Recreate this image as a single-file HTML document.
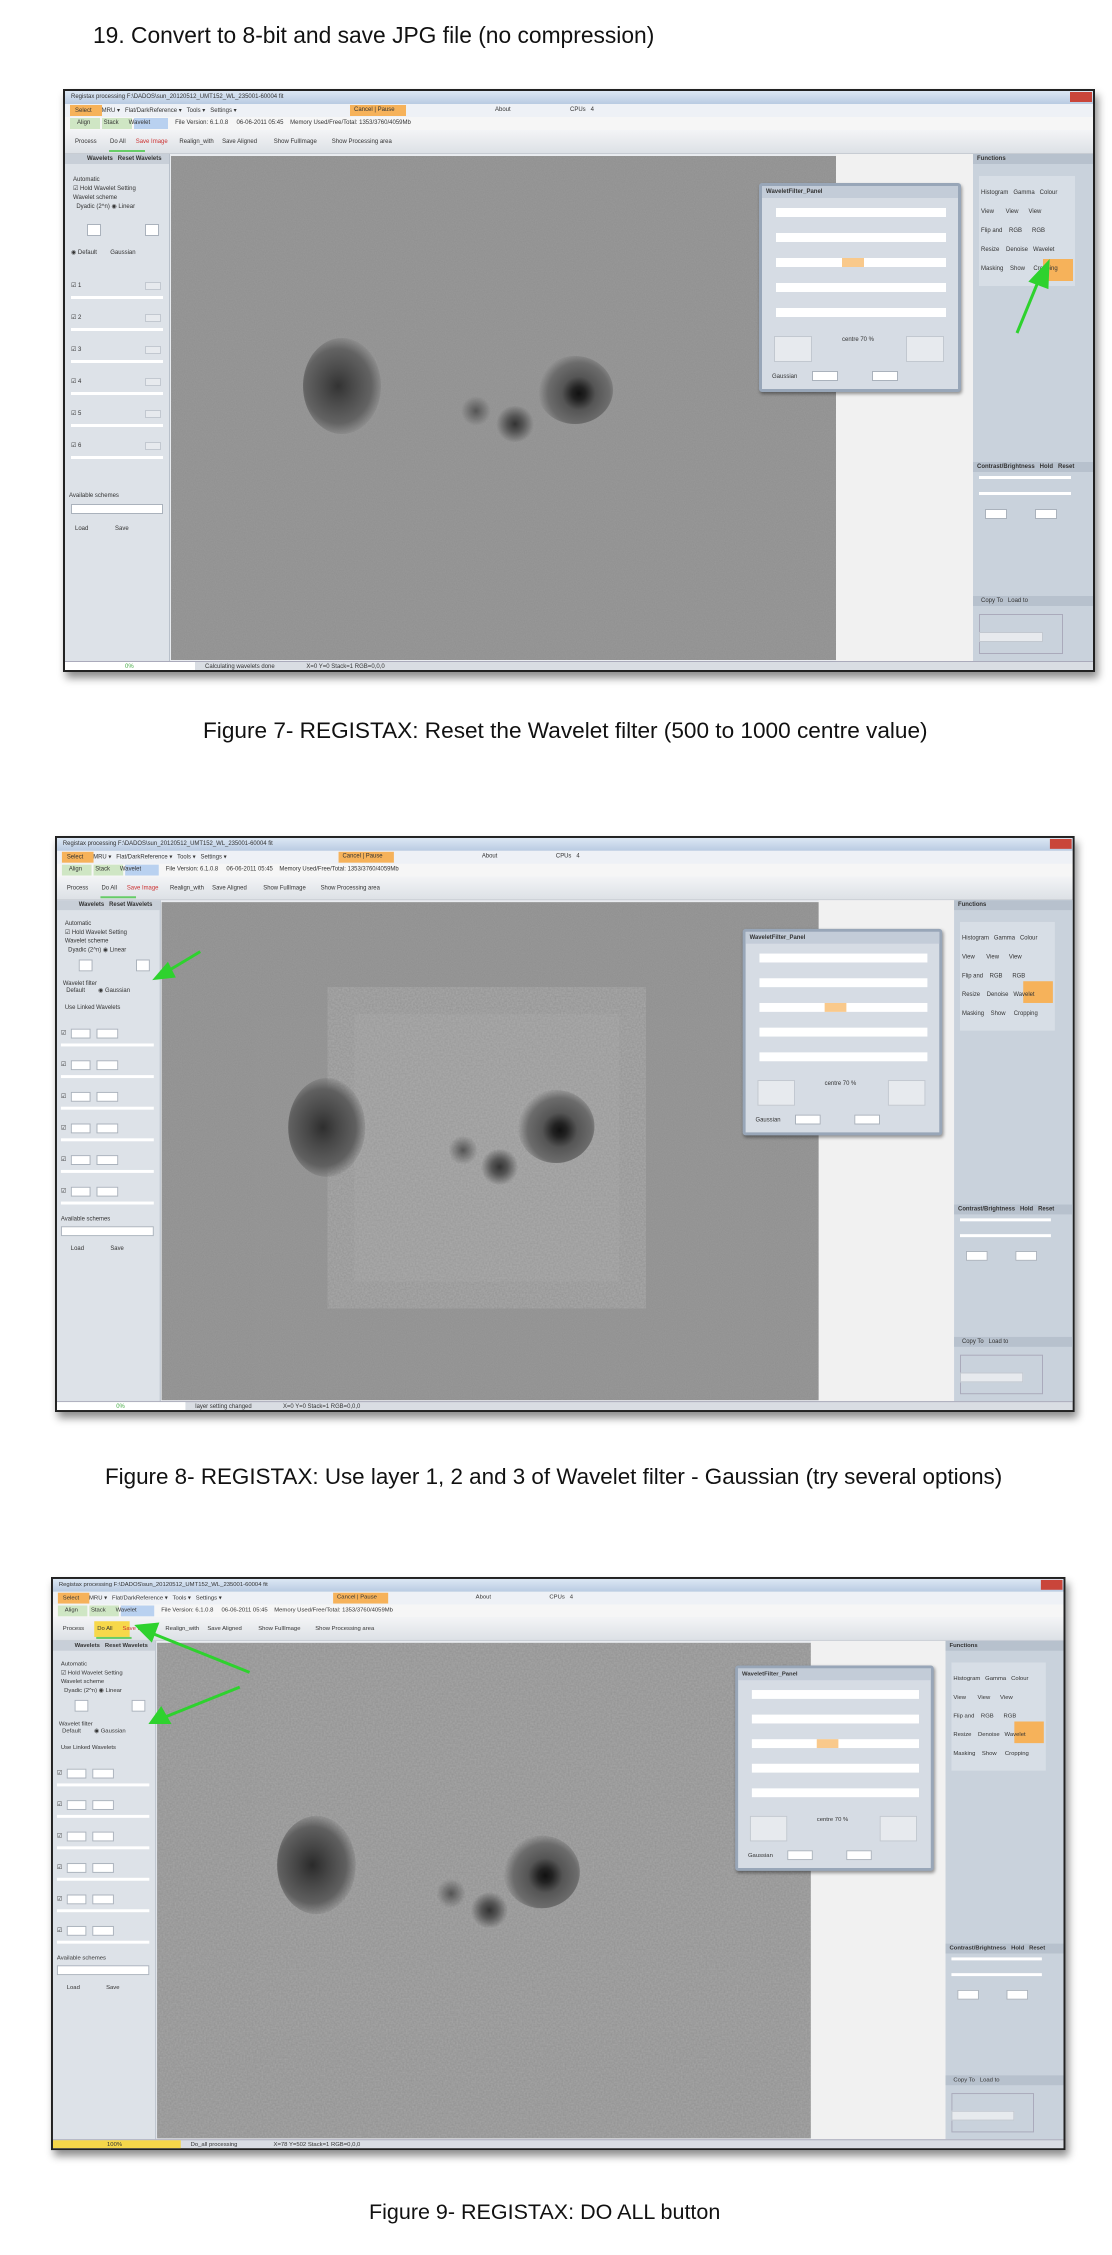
<!DOCTYPE html>
<html><head><meta charset="utf-8">
<style>
*{margin:0;padding:0;box-sizing:border-box}
body{width:1112px;height:2255px;background:#fff;position:relative;overflow:hidden;font-family:"Liberation Sans",sans-serif}
.h{position:absolute;font-family:"Liberation Sans",sans-serif;color:#111;white-space:nowrap}
.ss{position:absolute;width:1032px;height:583px;border:2px solid #222;background:#e9ecf0;box-shadow:3px 6px 8px rgba(0,0,0,.45);overflow:hidden;font-size:6px;color:#333;transform-origin:0 0}
.ss div{position:absolute}
.tb{left:0;top:0;width:100%;height:13px;background:linear-gradient(#dce7f4,#b9cbe2)}
.mn{left:0;top:13px;width:100%;height:13px;background:#eef1f6}
.tabs{left:0;top:26px;width:100%;height:13px;background:#f6f6f6}
.tool{left:0;top:39px;width:100%;height:24px;background:linear-gradient(#f3f4f6,#dde1e6);border-bottom:1px solid #c7ccd3}
.lp{left:0;top:63px;width:105px;height:507px;background:#dde2e8;border-right:1px solid #b8c0ca}
.img{left:106px;top:65px;width:665px;height:504px;background:#8e8e8e;overflow:hidden}
.wh{left:771px;top:63px;width:137px;height:507px;background:#f1f1f1}
.rp{left:908px;top:63px;width:124px;height:507px;background:#c9d2dc}
.st{left:0;top:570px;width:100%;height:13px;background:#d9dde3;border-top:1px solid #aab}
.dlg{left:694px;top:92px;width:202px;height:209px;background:#d6dce4;border:3px solid #98a6b8;border-radius:3px;box-shadow:1px 2px 3px rgba(0,0,0,.4)}
.or{background:#f6b25a}
.btn{background:#e7eaee;border:1px solid #c2c8d0}
.fld{background:#fff;border:1px solid #aab2bc;height:8px}
.spot{border-radius:50%}
svg.tx{position:absolute;left:0;top:0}
.t{white-space:nowrap}
</style></head><body>

<div class="h" style="left:93px;top:22px;font-size:22.8px">19. Convert to 8-bit and save JPG file (no compression)</div>

<!-- ============ FIG 7 ============ -->
<div class="ss" style="left:63px;top:89px">
 <div class="tb"><span class="t" style="position:absolute;left:6px;top:3px">Registax processing F:\DADOS\sun_20120512_UMT152_WL_235001-60004 fit</span><div style="left:1005px;top:1px;width:22px;height:10px;background:#c9453a"></div></div>
 <div class="mn"><div class="or" style="left:5px;top:1px;width:32px;height:11px"></div><span class="t" style="position:absolute;left:10px;top:3px">Select &nbsp;&nbsp;&nbsp;&nbsp; MRU ▾ &nbsp; Flat/DarkReference ▾ &nbsp; Tools ▾ &nbsp; Settings ▾</span><div class="or" style="left:285px;top:1px;width:56px;height:11px"></div><span class="t" style="position:absolute;left:289px;top:3px">Cancel | Pause</span><span class="t" style="position:absolute;left:430px;top:3px">About</span><span class="t" style="position:absolute;left:505px;top:3px">CPUs &nbsp; 4</span></div>
 <div class="tabs"><div style="left:5px;top:1px;width:30px;height:11px;background:#cfe6c4"></div><div style="left:37px;top:1px;width:30px;height:11px;background:#cfe6c4"></div><div style="left:69px;top:1px;width:34px;height:11px;background:#b9d1f0;color:#124"></div><span class="t" style="position:absolute;left:12px;top:3px">Align &nbsp;&nbsp;&nbsp;&nbsp;&nbsp;&nbsp; Stack &nbsp;&nbsp;&nbsp;&nbsp; Wavelet &nbsp;&nbsp;&nbsp;&nbsp;&nbsp;&nbsp;&nbsp;&nbsp;&nbsp;&nbsp;&nbsp;&nbsp;&nbsp; File Version: 6.1.0.8 &nbsp;&nbsp;&nbsp; 06-06-2011 05:45 &nbsp;&nbsp; Memory Used/Free/Total: 1353/3760/4059Mb</span></div>
 <div class="tool"><span class="t" style="position:absolute;left:10px;top:9px">Process &nbsp;&nbsp;&nbsp;&nbsp;&nbsp;&nbsp; Do All &nbsp;&nbsp;&nbsp;&nbsp; <span style="color:#c33">Save Image</span> &nbsp;&nbsp;&nbsp;&nbsp;&nbsp; Realign_with &nbsp;&nbsp;&nbsp; Save Aligned &nbsp;&nbsp;&nbsp;&nbsp;&nbsp;&nbsp;&nbsp;&nbsp; Show FullImage &nbsp;&nbsp;&nbsp;&nbsp;&nbsp;&nbsp;&nbsp; Show Processing area</span><div style="left:44px;top:20px;width:36px;height:2px;background:#6c6"></div></div>
 <div class="lp">
  <div style="left:0;top:0;width:104px;height:10px;background:#c8cfd8"></div><span class="t" style="position:absolute;left:22px;top:2px;font-weight:bold">Wavelets &nbsp; Reset Wavelets</span>
  <span class="t" style="position:absolute;left:8px;top:22px;line-height:9px">Automatic<br>☑ Hold Wavelet Setting<br>Wavelet scheme<br>&nbsp; Dyadic (2^n) ◉ Linear</span>
  <div class="fld" style="left:22px;top:70px;width:14px;height:12px"></div><div class="fld" style="left:80px;top:70px;width:14px;height:12px"></div>
  <span class="t" style="position:absolute;left:6px;top:95px">◉ Default &nbsp;&nbsp;&nbsp;&nbsp;&nbsp;&nbsp; Gaussian</span>
  <div style="left:6px;top:120px;width:92px;height:380px">
   <div style="left:0;top:0;width:92px;height:32px"><span class="t" style="position:absolute;left:0;top:8px">☑ 1</span><div class="btn" style="left:74px;top:8px;width:16px;height:8px"></div><div style="left:0;top:22px;width:92px;height:3px;background:#fff"></div></div>
   <div style="left:0;top:32px;width:92px;height:32px"><span class="t" style="position:absolute;left:0;top:8px">☑ 2</span><div class="btn" style="left:74px;top:8px;width:16px;height:8px"></div><div style="left:0;top:22px;width:92px;height:3px;background:#fff"></div></div>
   <div style="left:0;top:64px;width:92px;height:32px"><span class="t" style="position:absolute;left:0;top:8px">☑ 3</span><div class="btn" style="left:74px;top:8px;width:16px;height:8px"></div><div style="left:0;top:22px;width:92px;height:3px;background:#fff"></div></div>
   <div style="left:0;top:96px;width:92px;height:32px"><span class="t" style="position:absolute;left:0;top:8px">☑ 4</span><div class="btn" style="left:74px;top:8px;width:16px;height:8px"></div><div style="left:0;top:22px;width:92px;height:3px;background:#fff"></div></div>
   <div style="left:0;top:128px;width:92px;height:32px"><span class="t" style="position:absolute;left:0;top:8px">☑ 5</span><div class="btn" style="left:74px;top:8px;width:16px;height:8px"></div><div style="left:0;top:22px;width:92px;height:3px;background:#fff"></div></div>
   <div style="left:0;top:160px;width:92px;height:32px"><span class="t" style="position:absolute;left:0;top:8px">☑ 6</span><div class="btn" style="left:74px;top:8px;width:16px;height:8px"></div><div style="left:0;top:22px;width:92px;height:3px;background:#fff"></div></div>
  </div>
  <span class="t" style="position:absolute;left:4px;top:339px">Available schemes</span>
  <div class="fld" style="left:6px;top:350px;width:92px;height:10px"></div>
  <span class="t" style="position:absolute;left:10px;top:372px">Load &nbsp;&nbsp;&nbsp;&nbsp;&nbsp;&nbsp;&nbsp;&nbsp;&nbsp;&nbsp;&nbsp;&nbsp;&nbsp;&nbsp; Save</span>
 </div>
 <div class="img">
  <svg class="tx" width="665" height="504"><filter id="n1"><feTurbulence type="fractalNoise" baseFrequency="0.9" numOctaves="2" seed="3"/><feColorMatrix type="matrix" values="0 0 0 0 0.55  0 0 0 0 0.55  0 0 0 0 0.55  0 0 0 0.35 0"/></filter><rect width="665" height="504" fill="#8f8f8f"/><rect width="665" height="504" filter="url(#n1)" opacity=".6"/></svg>
  <div class="spot" style="left:132px;top:182px;width:78px;height:96px;background:radial-gradient(ellipse at 45% 50%,#333 0,#4a4a4a 25%,#636363 55%,rgba(110,110,110,0) 75%)"></div>
  <div class="spot" style="left:366px;top:200px;width:76px;height:68px;background:radial-gradient(circle at 55% 55%,#111 0,#222 12%,#555 30%,#6c6c6c 55%,rgba(120,120,120,0) 72%)"></div>
  <div class="spot" style="left:324px;top:250px;width:40px;height:36px;background:radial-gradient(circle,#333 0,#555 30%,rgba(120,120,120,0) 70%)"></div>
  <div class="spot" style="left:290px;top:240px;width:30px;height:30px;background:radial-gradient(circle,#555 0,rgba(120,120,120,0) 70%)"></div>
 </div>
 <div class="wh"></div>
 <div class="rp">
  <div style="left:0;top:0;width:124px;height:10px;background:#b7c1cd"></div><span class="t" style="position:absolute;left:4px;top:2px;font-weight:bold">Functions</span>
  <div style="left:6px;top:22px;width:96px;height:110px;background:#d7dee6"></div>
  <div class="or" style="left:70px;top:105px;width:30px;height:22px"></div>
  <span class="t" style="position:absolute;left:8px;top:30px;line-height:19px">Histogram &nbsp; Gamma &nbsp; Colour<br>View &nbsp;&nbsp;&nbsp;&nbsp;&nbsp; View &nbsp;&nbsp;&nbsp;&nbsp; View<br>Flip and &nbsp;&nbsp; RGB &nbsp;&nbsp;&nbsp;&nbsp; RGB<br>Resize &nbsp;&nbsp; Denoise &nbsp; Wavelet<br>Masking &nbsp;&nbsp; Show &nbsp;&nbsp;&nbsp; Cropping</span>
  <div style="left:0;top:308px;width:124px;height:10px;background:#b7c1cd"></div><span class="t" style="position:absolute;left:4px;top:310px;font-weight:bold">Contrast/Brightness &nbsp; Hold &nbsp; Reset</span>
  <div style="left:6px;top:322px;width:92px;height:3px;background:#fff"></div><div style="left:6px;top:338px;width:92px;height:3px;background:#fff"></div>
  <div class="fld" style="left:12px;top:355px;width:22px;height:10px"></div><div class="fld" style="left:62px;top:355px;width:22px;height:10px"></div>
  <div style="left:0;top:442px;width:124px;height:10px;background:#b7c1cd"></div><span class="t" style="position:absolute;left:8px;top:444px">Copy To &nbsp; Load to</span>
  <div style="left:6px;top:460px;width:84px;height:40px;border:1px solid #aab"></div>
  <div class="btn" style="left:6px;top:478px;width:64px;height:10px"></div>
 </div>
 <div class="dlg">
  <div style="left:0;top:0;width:196px;height:12px;background:#c3ccd8"></div><span class="t" style="position:absolute;left:4px;top:3px;font-weight:bold">WaveletFilter_Panel</span>
  <div style="left:14px;top:22px;width:170px;height:9px;background:#fff"></div>
  <div style="left:14px;top:47px;width:170px;height:9px;background:#fff"></div>
  <div style="left:14px;top:72px;width:170px;height:9px;background:#fff"></div><div class="or" style="left:80px;top:72px;width:22px;height:9px;opacity:.7"></div>
  <div style="left:14px;top:97px;width:170px;height:9px;background:#fff"></div>
  <div style="left:14px;top:122px;width:170px;height:9px;background:#fff"></div>
  <div class="btn" style="left:12px;top:150px;width:38px;height:26px"></div><div class="btn" style="left:144px;top:150px;width:38px;height:26px"></div>
  <span class="t" style="position:absolute;left:80px;top:151px">centre 70 %</span>
  <span class="t" style="position:absolute;left:10px;top:188px">Gaussian</span>
  <div class="fld" style="left:50px;top:185px;width:26px;height:10px"></div><div class="fld" style="left:110px;top:185px;width:26px;height:10px"></div>
 </div>
 <div class="st"><div style="left:0;top:0;width:130px;height:12px;background:#fff"></div><span class="t" style="position:absolute;left:60px;top:2px;color:#4a4">0%</span><span class="t" style="position:absolute;left:140px;top:2px">Calculating wavelets done &nbsp;&nbsp;&nbsp;&nbsp;&nbsp;&nbsp;&nbsp;&nbsp;&nbsp;&nbsp;&nbsp;&nbsp;&nbsp;&nbsp;&nbsp;&nbsp;&nbsp; X=0 Y=0 Stack=1 RGB=0,0,0</span></div>
 <svg style="position:absolute;left:0;top:0" width="1032" height="583"><g stroke="#2ed22e" stroke-width="3" fill="#2ed22e"><line x1="952" y1="242" x2="975" y2="186"/><polygon points="966,190 983,172 982,196"/></g></svg>
</div>
<div class="h" style="left:203px;top:718px;font-size:22.6px">Figure 7- REGISTAX: Reset the Wavelet filter (500 to 1000 centre value)</div>

<!-- ============ FIG 8 ============ -->
<div class="ss" style="left:55px;top:836px;transform:scale(0.988)">
 <div class="tb"><span class="t" style="position:absolute;left:6px;top:3px">Registax processing F:\DADOS\sun_20120512_UMT152_WL_235001-60004 fit</span><div style="left:1005px;top:1px;width:22px;height:10px;background:#c9453a"></div></div>
 <div class="mn"><div class="or" style="left:5px;top:1px;width:32px;height:11px"></div><span class="t" style="position:absolute;left:10px;top:3px">Select &nbsp;&nbsp;&nbsp;&nbsp; MRU ▾ &nbsp; Flat/DarkReference ▾ &nbsp; Tools ▾ &nbsp; Settings ▾</span><div class="or" style="left:285px;top:1px;width:56px;height:11px"></div><span class="t" style="position:absolute;left:289px;top:3px">Cancel | Pause</span><span class="t" style="position:absolute;left:430px;top:3px">About</span><span class="t" style="position:absolute;left:505px;top:3px">CPUs &nbsp; 4</span></div>
 <div class="tabs"><div style="left:5px;top:1px;width:30px;height:11px;background:#cfe6c4"></div><div style="left:37px;top:1px;width:30px;height:11px;background:#cfe6c4"></div><div style="left:69px;top:1px;width:34px;height:11px;background:#b9d1f0"></div><span class="t" style="position:absolute;left:12px;top:3px">Align &nbsp;&nbsp;&nbsp;&nbsp;&nbsp;&nbsp; Stack &nbsp;&nbsp;&nbsp;&nbsp; Wavelet &nbsp;&nbsp;&nbsp;&nbsp;&nbsp;&nbsp;&nbsp;&nbsp;&nbsp;&nbsp;&nbsp;&nbsp;&nbsp; File Version: 6.1.0.8 &nbsp;&nbsp;&nbsp; 06-06-2011 05:45 &nbsp;&nbsp; Memory Used/Free/Total: 1353/3760/4059Mb</span></div>
 <div class="tool"><span class="t" style="position:absolute;left:10px;top:9px">Process &nbsp;&nbsp;&nbsp;&nbsp;&nbsp;&nbsp; Do All &nbsp;&nbsp;&nbsp;&nbsp; <span style="color:#c33">Save Image</span> &nbsp;&nbsp;&nbsp;&nbsp;&nbsp; Realign_with &nbsp;&nbsp;&nbsp; Save Aligned &nbsp;&nbsp;&nbsp;&nbsp;&nbsp;&nbsp;&nbsp;&nbsp; Show FullImage &nbsp;&nbsp;&nbsp;&nbsp;&nbsp;&nbsp;&nbsp; Show Processing area</span><div style="left:44px;top:20px;width:36px;height:2px;background:#6c6"></div></div>
 <div class="lp">
  <div style="left:0;top:0;width:104px;height:10px;background:#c8cfd8"></div><span class="t" style="position:absolute;left:22px;top:2px;font-weight:bold">Wavelets &nbsp; Reset Wavelets</span>
  <span class="t" style="position:absolute;left:8px;top:20px;line-height:9px">Automatic<br>☑ Hold Wavelet Setting<br>Wavelet scheme<br>&nbsp; Dyadic (2^n) ◉ Linear</span>
  <div class="fld" style="left:22px;top:60px;width:14px;height:12px"></div><div class="fld" style="left:80px;top:60px;width:14px;height:12px"></div>
  <span class="t" style="position:absolute;left:6px;top:82px">Wavelet filter<br>&nbsp; Default &nbsp;&nbsp;&nbsp;&nbsp;&nbsp;&nbsp; ◉ Gaussian</span>
  <span class="t" style="position:absolute;left:8px;top:106px">Use Linked Wavelets</span>
  <div style="left:4px;top:128px;width:96px;height:200px">
   <div style="left:0;top:0;width:96px;height:32px"><span class="t" style="position:absolute;left:0;top:3px">☑</span><div class="fld" style="left:10px;top:2px;width:20px;height:10px"></div><div class="fld" style="left:36px;top:2px;width:22px;height:10px"></div><div style="left:0;top:17px;width:94px;height:3px;background:#fff"></div></div>
   <div style="left:0;top:32px;width:96px;height:32px"><span class="t" style="position:absolute;left:0;top:3px">☑</span><div class="fld" style="left:10px;top:2px;width:20px;height:10px"></div><div class="fld" style="left:36px;top:2px;width:22px;height:10px"></div><div style="left:0;top:17px;width:94px;height:3px;background:#fff"></div></div>
   <div style="left:0;top:64px;width:96px;height:32px"><span class="t" style="position:absolute;left:0;top:3px">☑</span><div class="fld" style="left:10px;top:2px;width:20px;height:10px"></div><div class="fld" style="left:36px;top:2px;width:22px;height:10px"></div><div style="left:0;top:17px;width:94px;height:3px;background:#fff"></div></div>
   <div style="left:0;top:96px;width:96px;height:32px"><span class="t" style="position:absolute;left:0;top:3px">☑</span><div class="fld" style="left:10px;top:2px;width:20px;height:10px"></div><div class="fld" style="left:36px;top:2px;width:22px;height:10px"></div><div style="left:0;top:17px;width:94px;height:3px;background:#fff"></div></div>
   <div style="left:0;top:128px;width:96px;height:32px"><span class="t" style="position:absolute;left:0;top:3px">☑</span><div class="fld" style="left:10px;top:2px;width:20px;height:10px"></div><div class="fld" style="left:36px;top:2px;width:22px;height:10px"></div><div style="left:0;top:17px;width:94px;height:3px;background:#fff"></div></div>
   <div style="left:0;top:160px;width:96px;height:32px"><span class="t" style="position:absolute;left:0;top:3px">☑</span><div class="fld" style="left:10px;top:2px;width:20px;height:10px"></div><div class="fld" style="left:36px;top:2px;width:22px;height:10px"></div><div style="left:0;top:17px;width:94px;height:3px;background:#fff"></div></div>
  </div>
  <span class="t" style="position:absolute;left:4px;top:320px">Available schemes</span>
  <div class="fld" style="left:4px;top:330px;width:94px;height:10px"></div>
  <span class="t" style="position:absolute;left:14px;top:350px">Load &nbsp;&nbsp;&nbsp;&nbsp;&nbsp;&nbsp;&nbsp;&nbsp;&nbsp;&nbsp;&nbsp;&nbsp;&nbsp;&nbsp; Save</span>
 </div>
 <div class="img">
  <svg class="tx" width="665" height="504"><filter id="n2"><feTurbulence type="fractalNoise" baseFrequency="0.9" numOctaves="2" seed="5"/><feColorMatrix type="matrix" values="0 0 0 0 0.55  0 0 0 0 0.55  0 0 0 0 0.55  0 0 0 0.35 0"/></filter><filter id="n2b"><feTurbulence type="fractalNoise" baseFrequency="0.6" numOctaves="1" seed="8"/><feColorMatrix type="matrix" values="0 0 0 0 0.5  0 0 0 0 0.5  0 0 0 0 0.5  0 0 0 1.2 -0.1"/></filter><rect width="665" height="504" fill="#8f8f8f"/><rect width="665" height="504" filter="url(#n2)" opacity=".6"/><rect x="195" y="113" width="268" height="271" fill="#999"/><rect x="195" y="113" width="268" height="271" filter="url(#n2b)" opacity=".55"/></svg>
  <div class="spot" style="left:128px;top:178px;width:78px;height:100px;background:radial-gradient(ellipse at 45% 50%,#2e2e2e 0,#474747 25%,#606060 55%,rgba(110,110,110,0) 75%)"></div>
  <div class="spot" style="left:360px;top:190px;width:78px;height:74px;background:radial-gradient(circle at 55% 55%,#111 0,#222 12%,#555 30%,#6c6c6c 55%,rgba(120,120,120,0) 72%)"></div>
  <div class="spot" style="left:322px;top:250px;width:40px;height:36px;background:radial-gradient(circle,#333 0,#555 30%,rgba(120,120,120,0) 70%)"></div>
  <div class="spot" style="left:290px;top:236px;width:30px;height:30px;background:radial-gradient(circle,#555 0,rgba(120,120,120,0) 70%)"></div>
 </div>
 <div class="wh"></div>
 <div class="rp">
  <div style="left:0;top:0;width:124px;height:10px;background:#b7c1cd"></div><span class="t" style="position:absolute;left:4px;top:2px;font-weight:bold">Functions</span>
  <div style="left:6px;top:22px;width:96px;height:110px;background:#d7dee6"></div>
  <div class="or" style="left:70px;top:82px;width:30px;height:22px"></div>
  <span class="t" style="position:absolute;left:8px;top:30px;line-height:19px">Histogram &nbsp; Gamma &nbsp; Colour<br>View &nbsp;&nbsp;&nbsp;&nbsp;&nbsp; View &nbsp;&nbsp;&nbsp;&nbsp; View<br>Flip and &nbsp;&nbsp; RGB &nbsp;&nbsp;&nbsp;&nbsp; RGB<br>Resize &nbsp;&nbsp; Denoise &nbsp; Wavelet<br>Masking &nbsp;&nbsp; Show &nbsp;&nbsp;&nbsp; Cropping</span>
  <div style="left:0;top:308px;width:124px;height:10px;background:#b7c1cd"></div><span class="t" style="position:absolute;left:4px;top:310px;font-weight:bold">Contrast/Brightness &nbsp; Hold &nbsp; Reset</span>
  <div style="left:6px;top:322px;width:92px;height:3px;background:#fff"></div><div style="left:6px;top:338px;width:92px;height:3px;background:#fff"></div>
  <div class="fld" style="left:12px;top:355px;width:22px;height:10px"></div><div class="fld" style="left:62px;top:355px;width:22px;height:10px"></div>
  <div style="left:0;top:442px;width:124px;height:10px;background:#b7c1cd"></div><span class="t" style="position:absolute;left:8px;top:444px">Copy To &nbsp; Load to</span>
  <div style="left:6px;top:460px;width:84px;height:40px;border:1px solid #aab"></div>
  <div class="btn" style="left:6px;top:478px;width:64px;height:10px"></div>
 </div>
 <div class="dlg">
  <div style="left:0;top:0;width:196px;height:12px;background:#c3ccd8"></div><span class="t" style="position:absolute;left:4px;top:3px;font-weight:bold">WaveletFilter_Panel</span>
  <div style="left:14px;top:22px;width:170px;height:9px;background:#fff"></div>
  <div style="left:14px;top:47px;width:170px;height:9px;background:#fff"></div>
  <div style="left:14px;top:72px;width:170px;height:9px;background:#fff"></div><div class="or" style="left:80px;top:72px;width:22px;height:9px;opacity:.7"></div>
  <div style="left:14px;top:97px;width:170px;height:9px;background:#fff"></div>
  <div style="left:14px;top:122px;width:170px;height:9px;background:#fff"></div>
  <div class="btn" style="left:12px;top:150px;width:38px;height:26px"></div><div class="btn" style="left:144px;top:150px;width:38px;height:26px"></div>
  <span class="t" style="position:absolute;left:80px;top:151px">centre 70 %</span>
  <span class="t" style="position:absolute;left:10px;top:188px">Gaussian</span>
  <div class="fld" style="left:50px;top:185px;width:26px;height:10px"></div><div class="fld" style="left:110px;top:185px;width:26px;height:10px"></div>
 </div>
 <div class="st"><div style="left:0;top:0;width:130px;height:12px;background:#fff"></div><span class="t" style="position:absolute;left:60px;top:2px;color:#4a4">0%</span><span class="t" style="position:absolute;left:140px;top:2px">layer setting changed &nbsp;&nbsp;&nbsp;&nbsp;&nbsp;&nbsp;&nbsp;&nbsp;&nbsp;&nbsp;&nbsp;&nbsp;&nbsp;&nbsp;&nbsp;&nbsp;&nbsp; X=0 Y=0 Stack=1 RGB=0,0,0</span></div>
 <svg style="position:absolute;left:0;top:0" width="1032" height="583"><g stroke="#2ed22e" stroke-width="3" fill="#2ed22e"><line x1="145" y1="115" x2="110" y2="136"/><polygon points="100,142 112,128 118,140"/></g></svg>
</div>
<div class="h" style="left:105px;top:1464px;font-size:22.4px">Figure 8- REGISTAX: Use layer 1, 2 and 3 of Wavelet filter - Gaussian (try several options)</div>

<!-- ============ FIG 9 ============ -->
<div class="ss" style="left:51px;top:1577px;transform:scale(0.983)">
 <div class="tb"><span class="t" style="position:absolute;left:6px;top:3px">Registax processing F:\DADOS\sun_20120512_UMT152_WL_235001-60004 fit</span><div style="left:1005px;top:1px;width:22px;height:10px;background:#c9453a"></div></div>
 <div class="mn"><div class="or" style="left:5px;top:1px;width:32px;height:11px"></div><span class="t" style="position:absolute;left:10px;top:3px">Select &nbsp;&nbsp;&nbsp;&nbsp; MRU ▾ &nbsp; Flat/DarkReference ▾ &nbsp; Tools ▾ &nbsp; Settings ▾</span><div class="or" style="left:285px;top:1px;width:56px;height:11px"></div><span class="t" style="position:absolute;left:289px;top:3px">Cancel | Pause</span><span class="t" style="position:absolute;left:430px;top:3px">About</span><span class="t" style="position:absolute;left:505px;top:3px">CPUs &nbsp; 4</span></div>
 <div class="tabs"><div style="left:5px;top:1px;width:30px;height:11px;background:#cfe6c4"></div><div style="left:37px;top:1px;width:30px;height:11px;background:#cfe6c4"></div><div style="left:69px;top:1px;width:34px;height:11px;background:#b9d1f0"></div><span class="t" style="position:absolute;left:12px;top:3px">Align &nbsp;&nbsp;&nbsp;&nbsp;&nbsp;&nbsp; Stack &nbsp;&nbsp;&nbsp;&nbsp; Wavelet &nbsp;&nbsp;&nbsp;&nbsp;&nbsp;&nbsp;&nbsp;&nbsp;&nbsp;&nbsp;&nbsp;&nbsp;&nbsp; File Version: 6.1.0.8 &nbsp;&nbsp;&nbsp; 06-06-2011 05:45 &nbsp;&nbsp; Memory Used/Free/Total: 1353/3760/4059Mb</span></div>
 <div class="tool"><div style="left:42px;top:4px;width:36px;height:16px;background:#f7d84a"></div><span class="t" style="position:absolute;left:10px;top:9px">Process &nbsp;&nbsp;&nbsp;&nbsp;&nbsp;&nbsp; Do All &nbsp;&nbsp;&nbsp;&nbsp; <span style="color:#c33">Save Image</span> &nbsp;&nbsp;&nbsp;&nbsp;&nbsp; Realign_with &nbsp;&nbsp;&nbsp; Save Aligned &nbsp;&nbsp;&nbsp;&nbsp;&nbsp;&nbsp;&nbsp;&nbsp; Show FullImage &nbsp;&nbsp;&nbsp;&nbsp;&nbsp;&nbsp;&nbsp; Show Processing area</span><div style="left:44px;top:20px;width:36px;height:2px;background:#6c6"></div></div>
 <div class="lp">
  <div style="left:0;top:0;width:104px;height:10px;background:#c8cfd8"></div><span class="t" style="position:absolute;left:22px;top:2px;font-weight:bold">Wavelets &nbsp; Reset Wavelets</span>
  <span class="t" style="position:absolute;left:8px;top:20px;line-height:9px">Automatic<br>☑ Hold Wavelet Setting<br>Wavelet scheme<br>&nbsp; Dyadic (2^n) ◉ Linear</span>
  <div class="fld" style="left:22px;top:60px;width:14px;height:12px"></div><div class="fld" style="left:80px;top:60px;width:14px;height:12px"></div>
  <span class="t" style="position:absolute;left:6px;top:82px">Wavelet filter<br>&nbsp; Default &nbsp;&nbsp;&nbsp;&nbsp;&nbsp;&nbsp; ◉ Gaussian</span>
  <span class="t" style="position:absolute;left:8px;top:106px">Use Linked Wavelets</span>
  <div style="left:4px;top:128px;width:96px;height:200px">
   <div style="left:0;top:0;width:96px;height:32px"><span class="t" style="position:absolute;left:0;top:3px">☑</span><div class="fld" style="left:10px;top:2px;width:20px;height:10px"></div><div class="fld" style="left:36px;top:2px;width:22px;height:10px"></div><div style="left:0;top:17px;width:94px;height:3px;background:#fff"></div></div>
   <div style="left:0;top:32px;width:96px;height:32px"><span class="t" style="position:absolute;left:0;top:3px">☑</span><div class="fld" style="left:10px;top:2px;width:20px;height:10px"></div><div class="fld" style="left:36px;top:2px;width:22px;height:10px"></div><div style="left:0;top:17px;width:94px;height:3px;background:#fff"></div></div>
   <div style="left:0;top:64px;width:96px;height:32px"><span class="t" style="position:absolute;left:0;top:3px">☑</span><div class="fld" style="left:10px;top:2px;width:20px;height:10px"></div><div class="fld" style="left:36px;top:2px;width:22px;height:10px"></div><div style="left:0;top:17px;width:94px;height:3px;background:#fff"></div></div>
   <div style="left:0;top:96px;width:96px;height:32px"><span class="t" style="position:absolute;left:0;top:3px">☑</span><div class="fld" style="left:10px;top:2px;width:20px;height:10px"></div><div class="fld" style="left:36px;top:2px;width:22px;height:10px"></div><div style="left:0;top:17px;width:94px;height:3px;background:#fff"></div></div>
   <div style="left:0;top:128px;width:96px;height:32px"><span class="t" style="position:absolute;left:0;top:3px">☑</span><div class="fld" style="left:10px;top:2px;width:20px;height:10px"></div><div class="fld" style="left:36px;top:2px;width:22px;height:10px"></div><div style="left:0;top:17px;width:94px;height:3px;background:#fff"></div></div>
   <div style="left:0;top:160px;width:96px;height:32px"><span class="t" style="position:absolute;left:0;top:3px">☑</span><div class="fld" style="left:10px;top:2px;width:20px;height:10px"></div><div class="fld" style="left:36px;top:2px;width:22px;height:10px"></div><div style="left:0;top:17px;width:94px;height:3px;background:#fff"></div></div>
  </div>
  <span class="t" style="position:absolute;left:4px;top:320px">Available schemes</span>
  <div class="fld" style="left:4px;top:330px;width:94px;height:10px"></div>
  <span class="t" style="position:absolute;left:14px;top:350px">Load &nbsp;&nbsp;&nbsp;&nbsp;&nbsp;&nbsp;&nbsp;&nbsp;&nbsp;&nbsp;&nbsp;&nbsp;&nbsp;&nbsp; Save</span>
 </div>
 <div class="img">
  <svg class="tx" width="665" height="504"><filter id="n3"><feTurbulence type="fractalNoise" baseFrequency="0.6" numOctaves="1" seed="11"/><feColorMatrix type="matrix" values="0 0 0 0 0.5  0 0 0 0 0.5  0 0 0 0 0.5  0 0 0 1.2 -0.1"/></filter><rect width="665" height="504" fill="#929292"/><rect width="665" height="504" filter="url(#n3)" opacity=".5"/></svg>
  <div class="spot" style="left:122px;top:176px;width:80px;height:100px;background:radial-gradient(ellipse at 45% 50%,#2a2a2a 0,#444 25%,#606060 55%,rgba(110,110,110,0) 75%)"></div>
  <div class="spot" style="left:352px;top:196px;width:78px;height:74px;background:radial-gradient(circle at 55% 55%,#111 0,#222 12%,#555 30%,#6c6c6c 55%,rgba(120,120,120,0) 72%)"></div>
  <div class="spot" style="left:318px;top:254px;width:40px;height:36px;background:radial-gradient(circle,#333 0,#555 30%,rgba(120,120,120,0) 70%)"></div>
  <div class="spot" style="left:284px;top:240px;width:30px;height:30px;background:radial-gradient(circle,#555 0,rgba(120,120,120,0) 70%)"></div>
 </div>
 <div class="wh"></div>
 <div class="rp">
  <div style="left:0;top:0;width:124px;height:10px;background:#b7c1cd"></div><span class="t" style="position:absolute;left:4px;top:2px;font-weight:bold">Functions</span>
  <div style="left:6px;top:22px;width:96px;height:110px;background:#d7dee6"></div>
  <div class="or" style="left:70px;top:82px;width:30px;height:22px"></div>
  <span class="t" style="position:absolute;left:8px;top:30px;line-height:19px">Histogram &nbsp; Gamma &nbsp; Colour<br>View &nbsp;&nbsp;&nbsp;&nbsp;&nbsp; View &nbsp;&nbsp;&nbsp;&nbsp; View<br>Flip and &nbsp;&nbsp; RGB &nbsp;&nbsp;&nbsp;&nbsp; RGB<br>Resize &nbsp;&nbsp; Denoise &nbsp; Wavelet<br>Masking &nbsp;&nbsp; Show &nbsp;&nbsp;&nbsp; Cropping</span>
  <div style="left:0;top:308px;width:124px;height:10px;background:#b7c1cd"></div><span class="t" style="position:absolute;left:4px;top:310px;font-weight:bold">Contrast/Brightness &nbsp; Hold &nbsp; Reset</span>
  <div style="left:6px;top:322px;width:92px;height:3px;background:#fff"></div><div style="left:6px;top:338px;width:92px;height:3px;background:#fff"></div>
  <div class="fld" style="left:12px;top:355px;width:22px;height:10px"></div><div class="fld" style="left:62px;top:355px;width:22px;height:10px"></div>
  <div style="left:0;top:442px;width:124px;height:10px;background:#b7c1cd"></div><span class="t" style="position:absolute;left:8px;top:444px">Copy To &nbsp; Load to</span>
  <div style="left:6px;top:460px;width:84px;height:40px;border:1px solid #aab"></div>
  <div class="btn" style="left:6px;top:478px;width:64px;height:10px"></div>
 </div>
 <div class="dlg" style="top:88px">
  <div style="left:0;top:0;width:196px;height:12px;background:#c3ccd8"></div><span class="t" style="position:absolute;left:4px;top:3px;font-weight:bold">WaveletFilter_Panel</span>
  <div style="left:14px;top:22px;width:170px;height:9px;background:#fff"></div>
  <div style="left:14px;top:47px;width:170px;height:9px;background:#fff"></div>
  <div style="left:14px;top:72px;width:170px;height:9px;background:#fff"></div><div class="or" style="left:80px;top:72px;width:22px;height:9px;opacity:.7"></div>
  <div style="left:14px;top:97px;width:170px;height:9px;background:#fff"></div>
  <div style="left:14px;top:122px;width:170px;height:9px;background:#fff"></div>
  <div class="btn" style="left:12px;top:150px;width:38px;height:26px"></div><div class="btn" style="left:144px;top:150px;width:38px;height:26px"></div>
  <span class="t" style="position:absolute;left:80px;top:151px">centre 70 %</span>
  <span class="t" style="position:absolute;left:10px;top:188px">Gaussian</span>
  <div class="fld" style="left:50px;top:185px;width:26px;height:10px"></div><div class="fld" style="left:110px;top:185px;width:26px;height:10px"></div>
 </div>
 <div class="st"><div style="left:0;top:0;width:130px;height:12px;background:#f5d64a"></div><span class="t" style="position:absolute;left:55px;top:2px;color:#333">100%</span><span class="t" style="position:absolute;left:140px;top:2px">Do_all processing &nbsp;&nbsp;&nbsp;&nbsp;&nbsp;&nbsp;&nbsp;&nbsp;&nbsp;&nbsp;&nbsp;&nbsp;&nbsp;&nbsp;&nbsp;&nbsp;&nbsp;&nbsp;&nbsp;&nbsp; X=78 Y=502 Stack=1 RGB=0,0,0</span></div>
 <svg style="position:absolute;left:0;top:0" width="1032" height="583"><g stroke="#2ed22e" stroke-width="3" fill="#2ed22e"><line x1="200" y1="95" x2="100" y2="55"/><polygon points="86,48 106,46 100,62"/><line x1="190" y1="110" x2="115" y2="140"/><polygon points="100,146 110,132 118,146"/></g></svg>
</div>
<div class="h" style="left:369px;top:2200px;font-size:21.5px">Figure 9- REGISTAX: DO ALL button</div>

</body></html>
